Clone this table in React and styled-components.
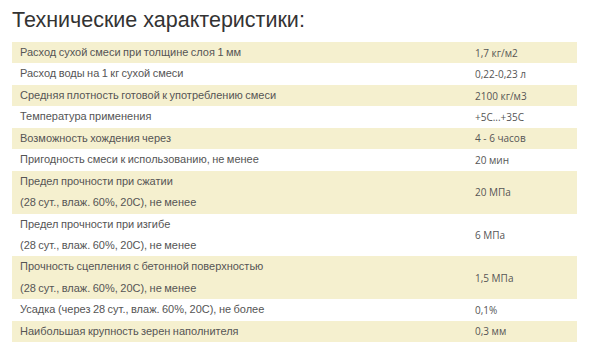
import styled, { createGlobalStyle } from "styled-components";

const GlobalStyle = createGlobalStyle`
  html, body {
    margin: 0;
    padding: 0;
    background: #fff;
  }
`;

const specs = [
  { name: ["Расход сухой смеси при толщине слоя 1 мм"], value: "1,7 кг/м2" },
  { name: ["Расход воды на 1 кг сухой смеси"], value: "0,22-0,23 л" },
  { name: ["Средняя плотность готовой к употреблению смеси"], value: "2100 кг/м3" },
  { name: ["Температура применения"], value: "+5C...+35C" },
  { name: ["Возможность хождения через"], value: "4 - 6 часов" },
  { name: ["Пригодность смеси к использованию, не менее"], value: "20 мин" },
  {
    name: ["Предел прочности при сжатии", "(28 сут., влаж. 60%, 20С), не менее"],
    value: "20 МПа",
  },
  {
    name: ["Предел прочности при изгибе", "(28 сут., влаж. 60%, 20С), не менее"],
    value: "6 МПа",
  },
  {
    name: ["Прочность сцепления с бетонной поверхностью", "(28 сут., влаж. 60%, 20С), не менее"],
    value: "1,5 МПа",
  },
  { name: ["Усадка (через 28 сут., влаж. 60%, 20С), не более"], value: "0,1%" },
  { name: ["Наибольшая крупность зерен наполнителя"], value: "0,3 мм" },
];

export default function App() {
  return (
    <>
      <GlobalStyle />
      <Page>
        <Title>Технические характеристики:</Title>
        <Specs>
          {specs.map((row, i) => (
            <Row key={i} $striped={i % 2 === 0}>
              <Name>
                {row.name.map((line, j) => (
                  <span key={j}>{line}</span>
                ))}
              </Name>
              <Value>{row.value}</Value>
            </Row>
          ))}
        </Specs>
      </Page>
    </>
  );
}

const Page = styled.div`
  width: 565px;
  padding: 8px 0 0 12px;
`;

const Title = styled.h2`
  margin: 0 0 10px 0;
  font-family: "Liberation Sans", Arial, sans-serif;
  font-size: 21.5px;
  font-weight: normal;
  line-height: 24px;
  color: #333;
`;

const Specs = styled.div`
  display: flex;
  flex-direction: column;
`;

const Row = styled.div`
  display: grid;
  grid-template-columns: 1fr 110px;
  align-items: center;
  background: ${(p) => (p.$striped ? "#f5f0cf" : "#fff")};
`;

const Name = styled.div`
  display: flex;
  flex-direction: column;
  padding: 0 8px;
  font-family: "Liberation Sans", Arial, sans-serif;
  font-size: 11px;
  word-spacing: -0.6px;
  color: #555;

  span {
    height: 21.45px;
    line-height: 21.45px;
  }
`;

const Value = styled.div`
  padding: 0 8px;
  font-family: "Open Sans", sans-serif;
  font-size: 10px;
  color: #555;
`;
